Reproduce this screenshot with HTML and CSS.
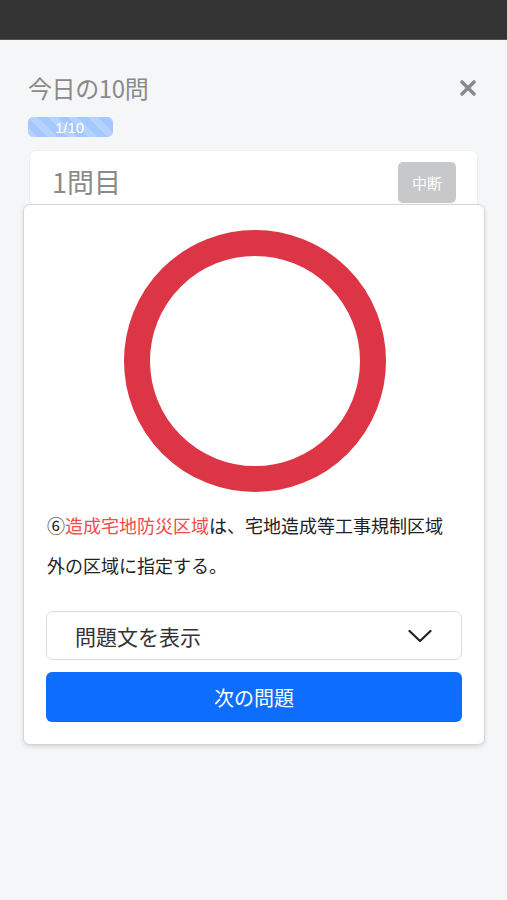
FILE: index.html
```html
<!DOCTYPE html>
<html lang="ja">
<head>
<meta charset="utf-8">
<title>今日の10問</title>
<link rel="stylesheet" href="styles.css">
</head>
<body>
<div class="topbar"></div>
<main class="page">
  <div class="title-row">
    <h1 class="title">今日の10問</h1>
    <svg class="close" width="18" height="18" viewBox="0 0 18 18"><path d="M3 3 L15 15 M15 3 L3 15" stroke="#8a8a8a" stroke-width="3.6" stroke-linecap="round"/></svg>
  </div>
  <div class="progress"><span class="progress-label">1/10</span></div>
  <section class="qcard">
    <div class="qcard-head">
      <span class="qnum">1問目</span>
      <span class="stop">中断</span>
    </div>
  </section>
  <section class="modal">
    <svg class="mark" width="262" height="262" viewBox="0 0 262 262"><circle cx="131" cy="131" r="118" fill="none" stroke="#dc3545" stroke-width="26"/></svg>
    <p class="answer">⑥<span class="hl">造成宅地防災区域</span>は、宅地造成等工事規制区域外の区域に指定する。</p>
    <div class="select">
      <span>問題文を表示</span>
      <svg width="24" height="14" viewBox="0 0 24 14"><path d="M1.5 2 L12 12 L22.5 2" fill="none" stroke="#222" stroke-width="2.2" stroke-linecap="round" stroke-linejoin="round"/></svg>
    </div>
    <button class="next">次の問題</button>
  </section>
</main>
</body>
</html>
```

FILE: styles.css
```css
html, body {
  margin: 0;
  padding: 0;
}
body {
  background: #f5f6f8;
  font-family: "Noto Sans CJK JP", "Noto Sans", sans-serif;
  color: #333;
  width: 507px;
  height: 900px;
  overflow: hidden;
}
.topbar {
  height: 39px;
  background: #333333;
  border-bottom: 1px solid #555;
}
.page {
  position: relative;
  padding: 29px 29px 0 28px;
}
.title-row {
  display: flex;
  justify-content: space-between;
  align-items: center;
  height: 36px;
}
.title {
  margin: 0;
  font-size: 24px;
  font-weight: 400;
  color: #8a8a8a;
  letter-spacing: -0.4px;
}
.close {
  margin-right: 1px;
  margin-top: 2px;
}
.progress {
  margin-top: 12px;
  width: 85px;
  height: 20px;
  border-radius: 5px;
  background-color: #a3c8fd;
  background-image: linear-gradient(45deg, rgba(255,255,255,.18) 25%, transparent 25%, transparent 50%, rgba(255,255,255,.18) 50%, rgba(255,255,255,.18) 75%, transparent 75%, transparent);
  background-size: 20px 20px;
  display: flex;
  align-items: center;
  justify-content: center;
}
.progress-label {
  font-family: "Liberation Sans", sans-serif;
  color: #fff;
  font-size: 15px;
  margin-right: 2px;
}
.qcard {
  margin-top: 13px;
  margin-left: 1px;
  background: #fff;
  border: 1px solid #eceef0;
  border-radius: 7px;
  height: 80px;
}
.qcard-head {
  display: flex;
  justify-content: space-between;
  align-items: flex-start;
  padding: 11px 21px 0 22px;
}
.qnum {
  font-size: 27px;
  color: #8a8a8a;
  line-height: 40px;
}
.stop {
  width: 58px;
  height: 41px;
  border-radius: 5px;
  background: #c6c8ca;
  color: #fff;
  font-size: 15px;
  display: flex;
  align-items: center;
  justify-content: center;
}
.modal {
  position: absolute;
  left: 23px;
  top: 164px;
  width: 462px;
  background: #fff;
  border: 1px solid #d6d6d6;
  border-radius: 7px;
  box-shadow: 0 2px 4px rgba(0,0,0,.12);
  padding: 25px 22px 22px 22px;
  display: flex;
  flex-direction: column;
  box-sizing: border-box;
}
.mark {
  align-self: center;
  margin-left: 1px;
}
.answer {
  margin: 13px 0 0 1px;
  width: 404px;
  font-size: 18px;
  line-height: 40px;
  color: #222;
}
.hl {
  color: #f44a4a;
}
.select {
  margin-top: 26px;
  height: 49px;
  border: 1px solid #dcdcdc;
  border-radius: 7px;
  box-sizing: border-box;
  display: flex;
  align-items: center;
  justify-content: space-between;
  padding: 0 29px 0 28px;
  font-size: 21px;
  color: #333;
}
.next {
  margin-top: 12px;
  height: 50px;
  border: none;
  border-radius: 6px;
  background: #0d6efd;
  color: #fff;
  font-family: inherit;
  font-size: 20px;
}
```
